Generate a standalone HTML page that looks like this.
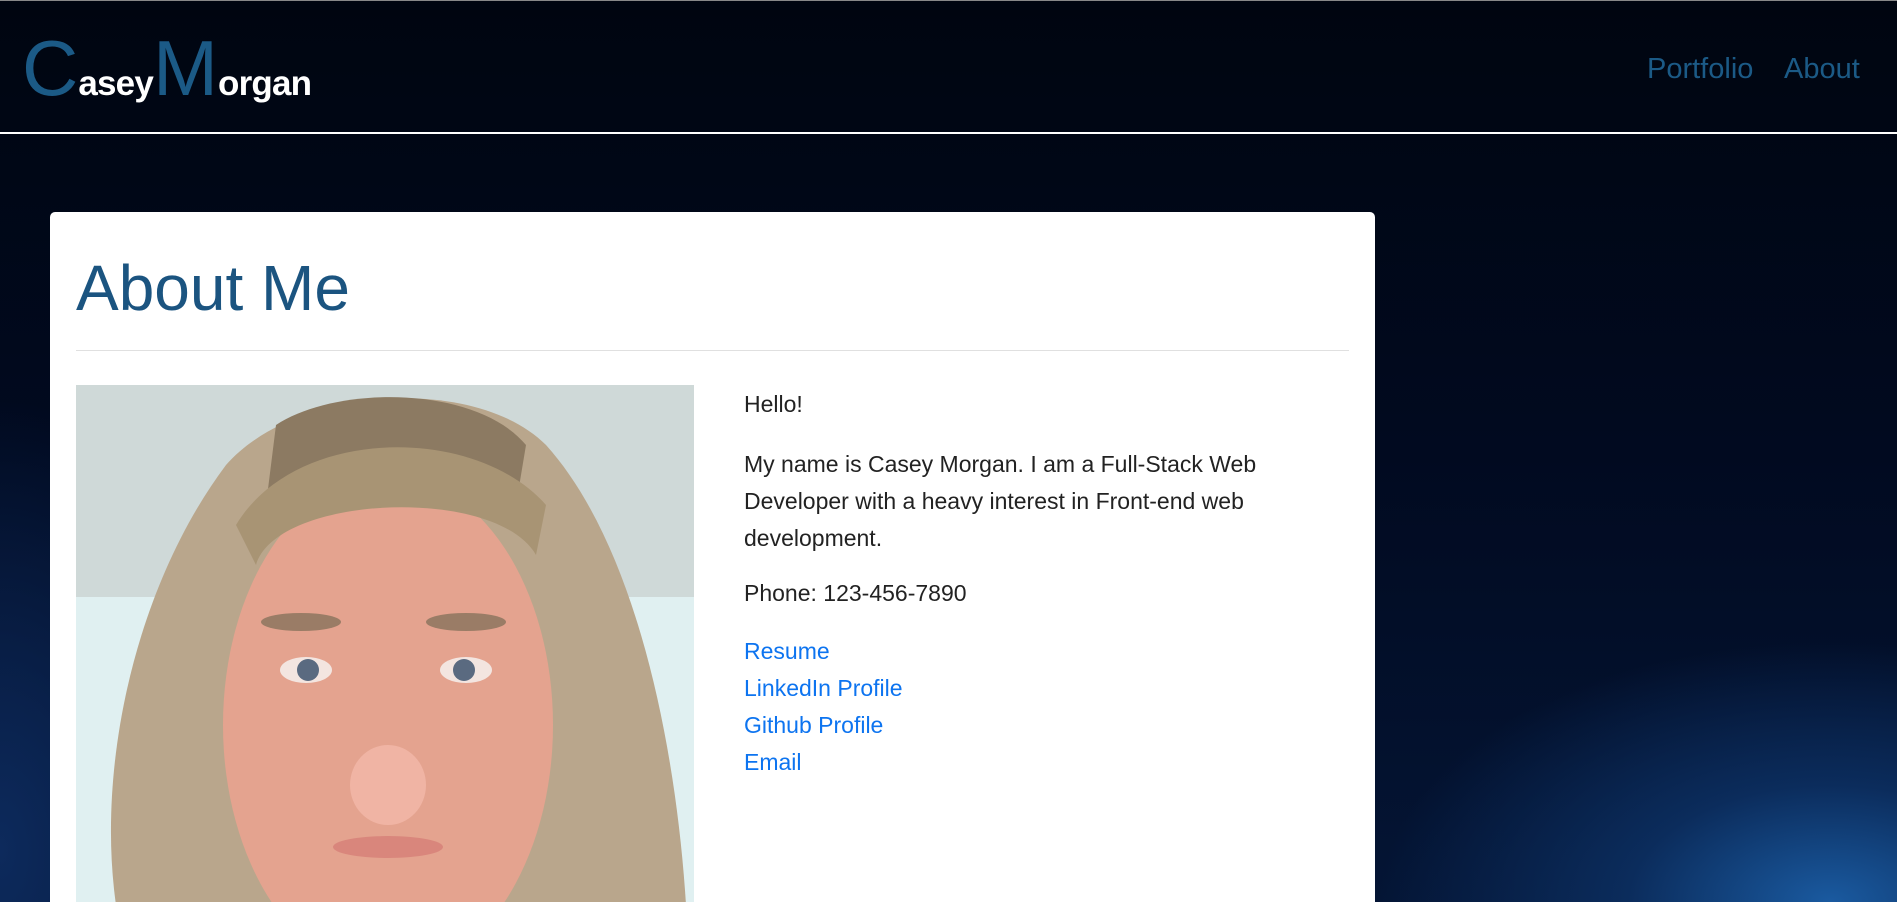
<!DOCTYPE html>
<html><head><meta charset="utf-8"><style>
html,body{margin:0;padding:0;width:1897px;height:902px;overflow:hidden;}
body{font-family:"Segoe UI","Liberation Sans",sans-serif;
background:radial-gradient(ellipse 450px 260px at 1830px 902px,#1a5aa0 0%,#0b2c5c 45%,transparent 100%),radial-gradient(ellipse 250px 450px at 0px 850px,#0d2a5c 0%,transparent 100%),linear-gradient(180deg,#000510 0%,#010a20 50%,#041535 100%);position:relative;}
.top{position:absolute;left:0;top:0;width:1897px;height:1px;background:#888;}
.navline{position:absolute;left:0;top:132px;width:1897px;height:2px;background:#fff;}
.logo{position:absolute;left:22px;top:23px;white-space:nowrap;}
.logo .b{font-size:78px;color:#1b5a86;font-weight:300;}
.logo .s{font-size:35px;color:#fff;font-weight:bold;letter-spacing:-0.8px;}
.nav{position:absolute;top:53px;font-size:29px;color:#1b5a86;}
.card{position:absolute;left:50px;top:212px;width:1325px;height:690px;background:#fff;border-radius:5px 5px 0 0;overflow:hidden;}
h1{position:absolute;left:26px;top:38px;margin:0;font-size:64px;font-weight:300;color:#1b5480;line-height:1.2;}
.hr{position:absolute;left:26px;top:138px;width:1273px;height:1px;background:#e0e0e0;}
.photo{position:absolute;left:26px;top:173px;}
.txt{position:absolute;left:694px;font-size:23px;color:#222;white-space:nowrap;}
.lnk{color:#0d74f0;}
</style></head><body>
<div class="top"></div>
<div class="logo"><span class="b">C</span><span class="s">asey</span><span class="b">M</span><span class="s">organ</span></div>
<div class="nav" style="left:1647px">Portfolio</div>
<div class="nav" style="left:1784px">About</div>
<div class="navline"></div>
<div class="card">
<h1>About Me</h1>
<div class="hr"></div>
<svg class="photo" width="618" height="517" viewBox="0 0 618 517">
<rect width="618" height="212" fill="#cfd9d8"/>
<rect y="212" width="618" height="310" fill="#e0f0f1"/>
<path d="M40 520 C20 380 60 200 150 80 C220 0 400 -10 470 60 C560 160 600 360 610 520 Z" fill="#b9a68c"/>
<path d="M200 40 C260 0 400 0 450 60 L440 120 L190 120 Z" fill="#8c7a62"/>
<ellipse cx="312" cy="340" rx="165" ry="250" fill="#e4a38f"/>
<path d="M180 180 C200 110 420 100 460 170 L470 120 C400 40 220 40 160 140 Z" fill="#a89474"/>
<ellipse cx="225" cy="237" rx="40" ry="9" fill="#9a7c66"/>
<ellipse cx="390" cy="237" rx="40" ry="9" fill="#9a7c66"/>
<ellipse cx="230" cy="285" rx="26" ry="13" fill="#f3e5e0"/>
<ellipse cx="390" cy="285" rx="26" ry="13" fill="#f3e5e0"/>
<circle cx="232" cy="285" r="11" fill="#5a6a80"/>
<circle cx="388" cy="285" r="11" fill="#5a6a80"/>
<ellipse cx="312" cy="400" rx="38" ry="40" fill="#f0b4a4"/>
<ellipse cx="312" cy="462" rx="55" ry="11" fill="#d9867c"/>
</svg>
<div class="txt" style="top:179px">Hello!</div>
<div class="txt" style="top:234px;line-height:37px">My name is Casey Morgan. I am a Full-Stack Web<br>Developer with a heavy interest in Front-end web<br>development.</div>
<div class="txt" style="top:368px">Phone: 123-456-7890</div>
<div class="txt lnk" style="top:421px;line-height:37px">Resume<br>LinkedIn Profile<br>Github Profile<br>Email</div>
</div>
</body></html>
